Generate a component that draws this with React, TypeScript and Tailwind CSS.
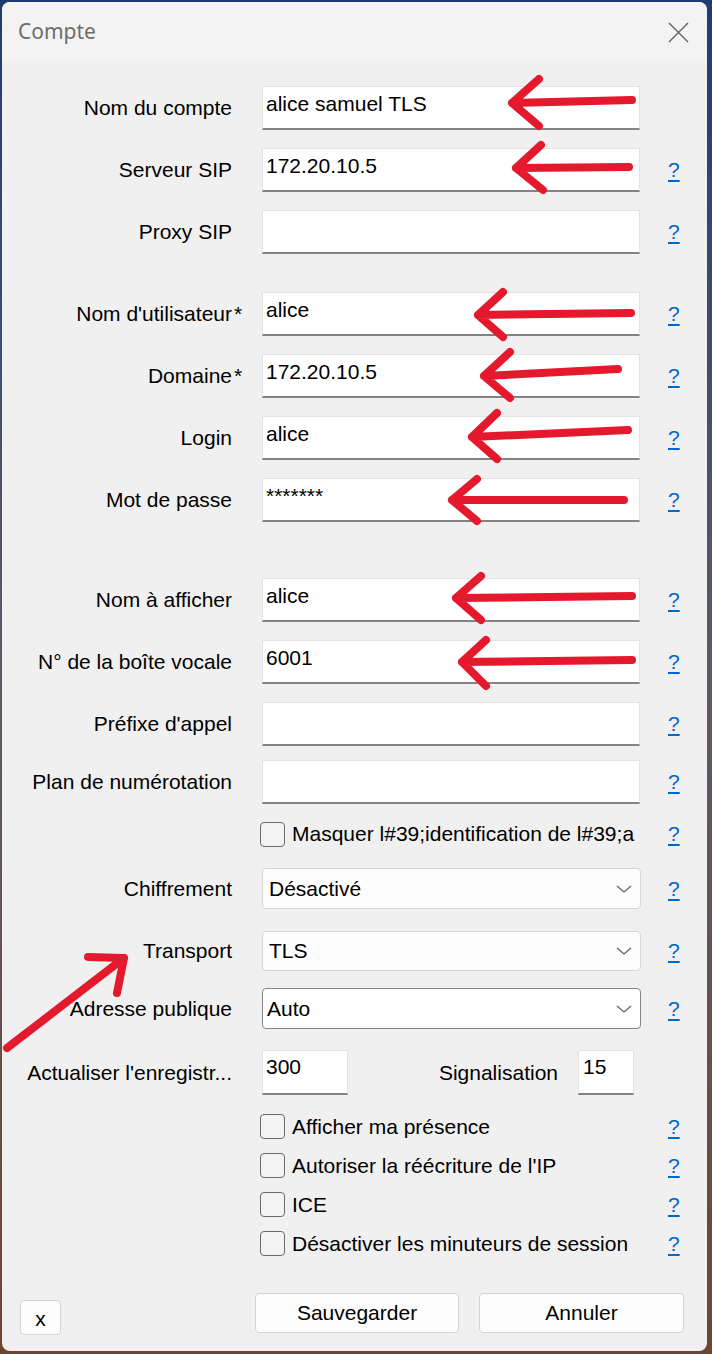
import React from "react";

const FONT = { fontFamily: '"Liberation Sans", Arial, sans-serif' };

function Help() {
  return (
    <span className="ml-[28px] text-[21px] leading-[24px] text-[#0066cc] underline underline-offset-[3px]">?</span>
  );
}

function Label({ text, star }: { text: string; star?: boolean }) {
  return (
    <div className="w-[230px] shrink-0 text-right text-[21px] leading-[24px] text-black whitespace-nowrap">
      <span className="relative">
        {text}
        {star && <span className="absolute left-full top-0 ml-[2px]">*</span>}
      </span>
    </div>
  );
}

function TextRow({ label, value, help = true, star, mt }: { label: string; value: string; help?: boolean; star?: boolean; mt: string }) {
  return (
    <div className={`flex items-center h-[44px] ${mt}`}>
      <Label text={label} star={star} />
      <div className="ml-[30px] w-[378px] h-full bg-white border border-[#e3e3e3] border-b-2 border-b-[#838383] pl-[3px] pt-[5px] text-[21px] leading-[24px] text-black whitespace-nowrap overflow-hidden">
        {value}
      </div>
      {help && <Help />}
    </div>
  );
}

function Chevron() {
  return (
    <svg width="16" height="8" viewBox="0 0 16 8" className="shrink-0">
      <path d="M1 1 L8 7 L15 1" fill="none" stroke="#5f5f5f" strokeWidth="1.2" />
    </svg>
  );
}

function SelectRow({ label, value, mt, h, dark }: { label: string; value: string; mt: string; h: string; dark?: boolean }) {
  return (
    <div className={`flex items-center ${h} ${mt}`}>
      <Label text={label} />
      <div
        className={`ml-[30px] w-[379px] h-full rounded-[4px] border flex items-center justify-between pr-[8px] text-[21px] leading-[24px] text-black ${
          dark ? "border-[#858585] bg-white pl-[4px]" : "border-[#d6d6d6] bg-[#fdfdfd] pl-[6px]"
        }`}
      >
        <span>{value}</span>
        <Chevron />
      </div>
      <span className="ml-[27px] text-[21px] leading-[24px] text-[#0066cc] underline underline-offset-[3px]">?</span>
    </div>
  );
}

function Box() {
  return <div className="w-[25px] h-[25px] shrink-0 rounded-[4px] border-[1.5px] border-[#6a6a6a] bg-[#f3f3f3]" />;
}

function CheckRow({ text, h, mt, w = "w-[382px]", hm = "ml-[26px]" }: { text: string; h: string; mt: string; w?: string; hm?: string }) {
  return (
    <div className={`flex items-center ${h} ${mt}`}>
      <div className="w-[258px] shrink-0" />
      <div className={`${w} shrink-0 flex items-center overflow-hidden`}>
        <Box />
        <span className="ml-[7px] min-w-0 flex-1 overflow-hidden text-[21px] leading-[24px] text-black whitespace-nowrap">{text}</span>
      </div>
      <span className={`${hm} text-[21px] leading-[24px] text-[#0066cc] underline underline-offset-[3px]`}>?</span>
    </div>
  );
}

const arrows: [number, number, number, number, number, number, number, number][] = [
  [632, 100, 512, 103, 539, 79, 539, 126],
  [629, 167, 516, 168, 541, 145, 543, 190],
  [631, 313, 478, 315, 503, 292, 503, 337],
  [618, 369, 484, 376, 510, 352, 510, 398],
  [628, 430, 472, 437, 497, 413, 497, 459],
  [624, 500, 452, 500, 477, 479, 477, 521],
  [632, 596, 456, 598, 481, 576, 481, 620],
  [632, 660, 462, 662, 486, 640, 486, 686],
  [7, 1048, 124, 958, 88, 957, 117, 993],
];

export default function App() {
  return (
    <div
      className="relative w-[712px] h-[1354px] overflow-hidden bg-gradient-to-b from-[#1e3c72] via-[#5d5a66] to-[#6e4630] pt-[2px] pl-[2px]"
      style={FONT}
    >
      <div className="w-[705px] h-[1349px] rounded-[8px] overflow-hidden flex flex-col bg-[#f0f0f0]">
        <div className="h-[60px] shrink-0 bg-[#f3f3f3] flex items-center justify-between pl-[16px] pr-[18px]">
          <span className="text-[21px] text-[#6e6e6e]" style={{ fontFamily: '"Noto Sans", "Open Sans", sans-serif' }}>
            Compte
          </span>
          <svg width="21" height="21" viewBox="0 0 21 21">
            <path d="M1 1 L20 20 M20 1 L1 20" stroke="#5f5f5f" strokeWidth="1.3" fill="none" />
          </svg>
        </div>
        <div className="flex-1 flex flex-col">
          <TextRow label="Nom du compte" value="alice samuel TLS" help={false} mt="mt-[24px]" />
          <TextRow label="Serveur SIP" value="172.20.10.5" mt="mt-[18px]" />
          <TextRow label="Proxy SIP" value="" mt="mt-[18px]" />
          <TextRow label="Nom d'utilisateur" star value="alice" mt="mt-[38px]" />
          <TextRow label="Domaine" star value="172.20.10.5" mt="mt-[18px]" />
          <TextRow label="Login" value="alice" mt="mt-[18px]" />
          <TextRow label="Mot de passe" value="*******" mt="mt-[18px]" />
          <TextRow label="Nom à afficher" value="alice" mt="mt-[56px]" />
          <TextRow label="N° de la boîte vocale" value="6001" mt="mt-[18px]" />
          <TextRow label="Préfixe d'appel" value="" mt="mt-[18px]" />
          <TextRow label="Plan de numérotation" value="" mt="mt-[14px]" />
          <CheckRow text="Masquer l#39;identification de l#39;a" h="h-[44px]" mt="mt-[8px]" w="w-[380px]" hm="ml-[28px]" />
          <SelectRow label="Chiffrement" value="Désactivé" h="h-[41px]" mt="mt-[12px]" />
          <SelectRow label="Transport" value="TLS" h="h-[40px]" mt="mt-[22px]" />
          <SelectRow label="Adresse publique" value="Auto" h="h-[41px]" mt="mt-[17px]" dark />
          <div className="flex items-center h-[45px] mt-[21px]">
            <Label text="Actualiser l'enregistr..." />
            <div className="ml-[30px] w-[86px] h-full bg-white border border-[#e3e3e3] border-b-2 border-b-[#838383] pl-[3px] pt-[4px] text-[21px] leading-[24px] text-black">
              300
            </div>
            <div className="w-[210px] text-right text-[21px] leading-[24px] text-black">Signalisation</div>
            <div className="ml-[20px] w-[56px] h-full bg-white border border-[#e3e3e3] border-b-2 border-b-[#838383] pl-[4px] pt-[4px] text-[21px] leading-[24px] text-black">
              15
            </div>
          </div>
          <CheckRow text="Afficher ma présence" h="h-[39px]" mt="mt-[12px]" />
          <CheckRow text="Autoriser la réécriture de l'IP" h="h-[39px]" mt="mt-0" />
          <CheckRow text="ICE" h="h-[39px]" mt="mt-0" />
          <CheckRow text="Désactiver les minuteurs de session" h="h-[39px]" mt="mt-0" />
          <div className="flex items-start mt-[30px]">
            <div className="ml-[18px] mt-[7px] w-[41px] h-[35px] rounded-[4px] border border-[#d3d3d3] bg-[#fdfdfd] flex items-center justify-center text-[21px] leading-[24px] text-black pt-[2px]">
              x
            </div>
            <div className="ml-[194px] w-[204px] h-[40px] rounded-[4px] border border-[#d3d3d3] bg-[#fdfdfd] flex items-center justify-center text-[21px] leading-[24px] text-black">
              Sauvegarder
            </div>
            <div className="ml-[20px] w-[205px] h-[40px] rounded-[4px] border border-[#d3d3d3] bg-[#fdfdfd] flex items-center justify-center text-[21px] leading-[24px] text-black">
              Annuler
            </div>
          </div>
        </div>
      </div>
      <svg className="absolute left-0 top-0 pointer-events-none" width="712" height="1354" viewBox="0 0 712 1354">
        {arrows.map(([tx, ty, px, py, ax, ay, bx, by], i) => (
          <path
            key={i}
            d={`M${tx} ${ty} L${px} ${py} M${ax} ${ay} L${px} ${py} L${bx} ${by}`}
            fill="none"
            stroke="#e4192e"
            strokeWidth="8"
            strokeLinecap="round"
            strokeLinejoin="round"
          />
        ))}
      </svg>
    </div>
  );
}
